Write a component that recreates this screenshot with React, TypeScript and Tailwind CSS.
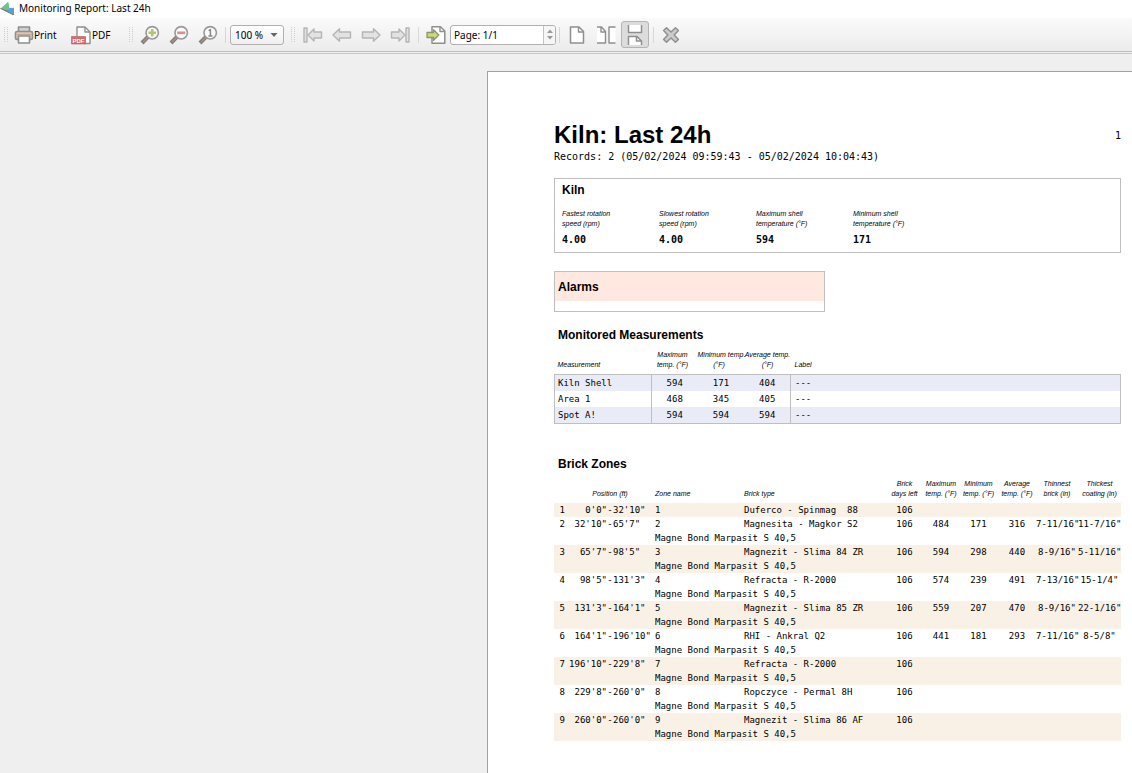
import type { ReactNode } from "react";

const G = "#8f8f8f";

function Svg({ w = 20, h = 20, children }: { w?: number; h?: number; children: ReactNode }) {
  return (
    <svg width={w} height={h} viewBox={`0 0 ${w} ${h}`} fill="none" strokeLinejoin="round" aria-hidden="true" className="block shrink-0">
      {children}
    </svg>
  );
}

function AppLogo() {
  return (
    <Svg w={14} h={14}>
      <path d="M0.500 7.500 14 6.800V14Z" fill="#5b9fd6" />
      <path d="M1.500 6.800 8.200 0.800 9.800 8.500 5 9Z" fill="#6cc58c" />
      <path d="M0.500 7.200 14 14" stroke="#86745f" strokeWidth="1.100" />
    </Svg>
  );
}

function PrintIcon() {
  return (
    <Svg>
      <path d="M4.500 7V2h11v5" fill="#d0d0d0" stroke={G} strokeWidth="1.600" />
      <rect x="1.500" y="6.500" width="17" height="8" rx="1.500" fill="#e3c3ae" stroke={G} strokeWidth="1.600" />
      <path d="M3 9.500h14" stroke="#c9a590" />
      <rect x="4.500" y="11" width="11" height="7" fill="#fff" stroke={G} strokeWidth="1.600" />
    </Svg>
  );
}

function PdfIcon() {
  return (
    <Svg>
      <path d="M6 11V2h8l5 5v11.500H13.500" fill="#fff" stroke={G} strokeWidth="1.400" />
      <path d="M14 2v5h5" stroke={G} strokeWidth="1.400" />
      <rect x="0.500" y="11.500" width="14" height="7.500" fill="#d46c6c" stroke="#b85858" strokeWidth="0.600" />
      <text x="7.500" y="17.500" textAnchor="middle" fontSize="6" fontWeight="700" fill="#fff" fontFamily="Liberation Sans, sans-serif">PDF</text>
    </Svg>
  );
}

function ZoomIcon({ kind }: { kind: "in" | "out" | "one" }) {
  return (
    <Svg>
      <path d="M8.200 11.600 2 18" stroke="#857b78" strokeWidth="4" />
      <path d="M7.400 12.600 2.800 17.200" stroke="#a98f88" strokeWidth="1.600" />
      <circle cx="12.200" cy="7.800" r="6.200" fill="#fafafa" stroke="#999" strokeWidth="1.600" />
      {kind === "in" && <path d="M12.200 4v7.600M8.400 7.800h7.600" stroke="#b4c566" strokeWidth="2.600" />}
      {kind === "out" && <path d="M8.200 7.800h8" stroke="#dd8c8c" strokeWidth="2.600" />}
      {kind === "one" && <path d="M10.600 5.600 12.400 4.600V11M10.400 11h4" stroke="#888" strokeWidth="1.500" />}
    </Svg>
  );
}

function NavIcon({ dir, edge }: { dir: "left" | "right"; edge?: boolean }) {
  return (
    <Svg>
      <g transform={dir === "right" ? "matrix(-1 0 0 1 20 0)" : undefined} stroke="#b5b5b5" strokeWidth="1.400" fill="#e2e2e2">
        {edge && <rect x="1" y="3" width="3" height="14" />}
        <path d={edge ? "M5 10 11 4V7h7.500v6H11v3Z" : "M1 10 7.500 3.800V7H18.500v6H7.500v3.200Z"} />
      </g>
    </Svg>
  );
}

function GotoIcon() {
  return (
    <Svg>
      <path d="M6 1.800h8.500L18.800 6v12.200H6Z" fill="#fff" stroke={G} strokeWidth="1.500" />
      <path d="M14 2v4.500h4.500" stroke={G} strokeWidth="1.400" />
      <path d="M1 7.500h6.500V4.800L12.800 10 7.500 15.200V12.500H1Z" fill="#c9da78" stroke="#8d9470" strokeWidth="1.300" />
    </Svg>
  );
}

function SinglePageIcon() {
  return (
    <Svg>
      <path d="M3.500 2h8.500l4.500 4.500V18h-13Z" fill="#fff" stroke={G} strokeWidth="1.500" />
      <path d="M11.500 2v5h5" stroke={G} strokeWidth="1.400" />
    </Svg>
  );
}

function FacingPagesIcon() {
  return (
    <Svg>
      <path d="M1 2h4.500L9.500 6.500V18H1Z" fill="#fff" />
      <path d="M1 2h4.500L9.500 6.500V18H1M5 2v5h4.500" stroke={G} strokeWidth="1.400" />
      <path d="M19.500 2H13v16h6.500Z" fill="#fff" />
      <path d="M19.500 2H13v16h6.500" stroke={G} strokeWidth="1.400" />
    </Svg>
  );
}

function ContinuousIcon() {
  return (
    <Svg h={22}>
      <path d="M3.500 1V8.500h13V1Z" fill="#fff" />
      <path d="M3.500 1V8.500h13V1" stroke={G} strokeWidth="1.500" />
      <path d="M3.500 21V12.500h8.500L16.500 17v4Z" fill="#fff" />
      <path d="M3.500 21V12.500h8.500L16.500 17v4M11.500 12.500V17h5" stroke={G} strokeWidth="1.500" />
    </Svg>
  );
}

function CloseIcon() {
  return (
    <Svg>
      <path d="M5.500 2.800 10 7 14.500 2.800 17.400 5.500 13.200 10 17.400 14.500 14.500 17.200 10 13 5.500 17.200 2.600 14.500 6.800 10 2.600 5.500Z" fill="#cbcbcb" stroke={G} strokeWidth="1.500" />
    </Svg>
  );
}

function Grip() {
  return (
    <svg width="4" height="16" viewBox="0 0 4 16" fill="#cdcdcd" aria-hidden="true" className="block shrink-0">
      {[0, 2, 4, 6, 8, 10, 12, 14].map((y) => (
        <path key={y} d={`M0 ${y}h1v1h-1zM3 ${y}h1v1h-1z`} />
      ))}
    </svg>
  );
}

function Divider() {
  return <span className="h-4 w-px shrink-0 bg-[#d8d8d8]" />;
}

function Tool({ label, children }: { label: string; children: ReactNode }) {
  return (
    <button type="button" aria-label={label} className="shrink-0">
      {children}
    </button>
  );
}

function Toolbar() {
  return (
    <div className="flex h-[34px] items-center border-b border-[#bdbdbd] bg-linear-to-b from-[#fafafa] to-[#ececec] pl-1 font-['Noto_Sans','Open_Sans',sans-serif] text-[10px] leading-4 text-black">
      <Grip />
      <button type="button" className="ml-1.5 flex w-[42px] shrink-0 items-center">
        <PrintIcon />
        Print
      </button>
      <button type="button" className="ml-[15px] flex w-[42px] shrink-0 items-center gap-px">
        <PdfIcon />
        PDF
      </button>
      <div className="ml-4 flex items-center gap-[7px]">
        <Grip />
        <div className="flex items-center gap-[9px]">
          <Tool label="Zoom in"><ZoomIcon kind="in" /></Tool>
          <Tool label="Zoom out"><ZoomIcon kind="out" /></Tool>
          <Tool label="Actual size"><ZoomIcon kind="one" /></Tool>
        </div>
        <Divider />
      </div>
      <div className="relative ml-1 flex shrink-0 items-center">
        <select aria-label="Zoom level" defaultValue="100" className="h-5 w-[54px] appearance-none rounded-[3px] border border-[#b0b0b0] bg-linear-to-b from-white to-[#efefef] pl-1">
          <option value="100">100 %</option>
          <option value="200">200 %</option>
        </select>
        <svg width="8" height="4" viewBox="0 0 8 4" aria-hidden="true" className="pointer-events-none absolute right-1.5">
          <path d="M0.500 0h7L4 4Z" fill="#666" />
        </svg>
      </div>
      <div className="ml-[7px] flex items-center gap-2">
        <Grip />
        <div className="flex items-center gap-[9px]">
          <Tool label="First page"><NavIcon dir="left" edge /></Tool>
          <Tool label="Previous page"><NavIcon dir="left" /></Tool>
          <Tool label="Next page"><NavIcon dir="right" /></Tool>
          <Tool label="Last page"><NavIcon dir="right" edge /></Tool>
        </div>
      </div>
      <div className="ml-2 flex items-center gap-[7px]">
        <Divider />
        <Tool label="Go to page"><GotoIcon /></Tool>
      </div>
      <div className="ml-1 flex h-5 w-[106px] shrink-0 overflow-hidden rounded-[3px] border border-[#b0b0b0] bg-white">
        <input aria-label="Page" defaultValue="Page: 1/1" className="w-0 flex-1 pl-[3px] outline-none" />
        <div className="flex w-3 flex-col items-center justify-center gap-[3px] border-l border-[#c4c4c4] bg-[#f6f6f6]">
          <button type="button" aria-label="Next" className="block">
            <svg width="6" height="4" viewBox="0 0 6 4" className="block"><path d="M0 4h6L3 0.500Z" fill="#9a9a9a" /></svg>
          </button>
          <button type="button" aria-label="Previous" className="block">
            <svg width="6" height="4" viewBox="0 0 6 4" className="block"><path d="M0 0h6L3 3.500Z" fill="#9a9a9a" /></svg>
          </button>
        </div>
      </div>
      <div className="ml-[3px] flex items-center gap-[7px]">
        <Divider />
        <div className="flex items-center gap-[9px]">
          <Tool label="Single page"><SinglePageIcon /></Tool>
          <Tool label="Facing pages"><FacingPagesIcon /></Tool>
        </div>
      </div>
      <button type="button" aria-label="Continuous" aria-pressed="true" className="ml-[5px] flex h-[27px] w-7 shrink-0 items-center justify-center rounded-[3px] border border-[#b4b4b4] bg-[#dcdcdc]">
        <ContinuousIcon />
      </button>
      <div className="ml-1 flex items-center gap-[7px]">
        <Divider />
        <Tool label="Close"><CloseIcon /></Tool>
      </div>
    </div>
  );
}

const stats = [
  { a: "Fastest rotation", b: "speed (rpm)", value: "4.00" },
  { a: "Slowest rotation", b: "speed (rpm)", value: "4.00" },
  { a: "Maximum shell", b: "temperature (°F)", value: "594" },
  { a: "Minimum shell", b: "temperature (°F)", value: "171" },
];

const measurements = [
  ["Kiln Shell", "594", "171", "404", "---"],
  ["Area 1", "468", "345", "405", "---"],
  ["Spot A!", "594", "594", "594", "---"],
];

type Zone = { from: string; to: string; brick: string; values: string[]; bond: boolean };

const zones: Zone[] = [
  { from: `0'0"`, to: `32'10"`, brick: "Duferco - Spinmag  88", values: ["106", "", "", "", "", ""], bond: false },
  { from: `32'10"`, to: `65'7"`, brick: "Magnesita - Magkor S2", values: ["106", "484", "171", "316", `7-11/16"`, `11-7/16"`], bond: true },
  { from: `65'7"`, to: `98'5"`, brick: "Magnezit - Slima 84 ZR", values: ["106", "594", "298", "440", `8-9/16"`, `5-11/16"`], bond: true },
  { from: `98'5"`, to: `131'3"`, brick: "Refracta - R-2000", values: ["106", "574", "239", "491", `7-13/16"`, `15-1/4"`], bond: true },
  { from: `131'3"`, to: `164'1"`, brick: "Magnezit - Slima 85 ZR", values: ["106", "559", "207", "470", `8-9/16"`, `22-1/16"`], bond: true },
  { from: `164'1"`, to: `196'10"`, brick: "RHI - Ankral Q2", values: ["106", "441", "181", "293", `7-11/16"`, `8-5/8"`], bond: true },
  { from: `196'10"`, to: `229'8"`, brick: "Refracta - R-2000", values: ["106", "", "", "", "", ""], bond: true },
  { from: `229'8"`, to: `260'0"`, brick: "Ropczyce - Permal 8H", values: ["106", "", "", "", "", ""], bond: true },
  { from: `260'0"`, to: `260'0"`, brick: "Magnezit - Slima 86 AF", values: ["106", "", "", "", "", ""], bond: true },
];

const brickHeads = [
  ["Brick", "days left"],
  ["Maximum", "temp. (°F)"],
  ["Minimum", "temp. (°F)"],
  ["Average", "temp. (°F)"],
  ["Thinnest", "brick (in)"],
  ["Thickest", "coating (in)"],
];

const mono = "font-['DejaVu_Sans_Mono','Liberation_Mono',monospace]";
const th = "p-0 pb-1 align-bottom text-[7px] leading-[10px] font-normal whitespace-nowrap italic";

function MeasurementTable() {
  return (
    <table className="mt-[7px] w-full table-fixed border-collapse">
      <colgroup>
        <col className="w-[97px]" />
        <col className="w-[46px]" />
        <col className="w-[47px]" />
        <col className="w-[46px]" />
        <col />
      </colgroup>
      <thead>
        <tr>
          <th className={`${th} pl-[3px] text-left`}>Measurement</th>
          <th className={`${th} pr-1`}>Maximum<br />temp. (°F)</th>
          <th className={`${th} pr-1`}>Minimum temp.<br />(°F)</th>
          <th className={th}>Average temp.<br />(°F)</th>
          <th className={`${th} pl-1 text-left`}>Label</th>
        </tr>
      </thead>
      <tbody className={`border border-[#bfbfbf] text-[9px] leading-4 ${mono}`}>
        {measurements.map((row) => (
          <tr key={row[0]} className="odd:bg-[#e9ecf6]">
            <td className="border-r border-[#bfbfbf] p-0 pl-[3px]">{row[0]}</td>
            <td className="p-0 text-center">{row[1]}</td>
            <td className="p-0 text-center">{row[2]}</td>
            <td className="border-r border-[#bfbfbf] p-0 text-center">{row[3]}</td>
            <td className="p-0 pl-1">{row[4]}</td>
          </tr>
        ))}
      </tbody>
    </table>
  );
}

function BrickTable() {
  return (
    <table className="mt-[7px] w-full table-fixed border-collapse">
      <colgroup>
        <col className="w-[11px]" />
        <col className="w-[42px]" />
        <col className="w-1.5" />
        <col className="w-[42px]" />
        <col className="w-[89px]" />
        <col />
        <col className="w-[37px]" />
        <col className="w-9" />
        <col className="w-[39px]" />
        <col className="w-[38px]" />
        <col className="w-[42px]" />
        <col className="w-[43px]" />
      </colgroup>
      <thead>
        <tr>
          <td className="p-0" />
          <th colSpan={3} className={th}>Position (ft)</th>
          <th className={`${th} text-left`}>Zone name</th>
          <th className={`${th} text-left`}>Brick type</th>
          {brickHeads.map(([a, b], i) => (
            <th key={i} className={th}>{a}<br />{b}</th>
          ))}
        </tr>
      </thead>
      {zones.map((z, i) => (
        <tbody key={i} className={`text-[9px] leading-[14px] whitespace-pre ${mono} ${i % 2 ? "bg-white" : "bg-[#faf1e6]"}`}>
          <tr>
            <td className="p-0 text-right">{i + 1}</td>
            <td className="p-0 text-right">{z.from}</td>
            <td className="p-0 text-center">-</td>
            <td className="p-0">{z.to}</td>
            <td className="p-0">{i + 1}</td>
            <td className="p-0">{z.brick}</td>
            {z.values.map((v, k) => (
              <td key={k} className="p-0 text-center">{v}</td>
            ))}
          </tr>
          {z.bond && (
            <tr>
              <td colSpan={4} className="p-0" />
              <td colSpan={8} className="p-0">Magne Bond Marpasit S 40,5</td>
            </tr>
          )}
        </tbody>
      ))}
    </table>
  );
}

export default function App() {
  return (
    <div className="flex min-h-screen flex-col bg-[#efefef] text-black">
      <header className="flex h-[18px] items-center gap-[5px] bg-white pb-0.5 font-['Noto_Sans','Open_Sans',sans-serif] text-[10px] leading-4">
        <AppLogo />
        Monitoring Report: Last 24h
      </header>
      <Toolbar />
      <main className="mt-px flex flex-1 flex-col border-t border-[#c8c8c8] pt-[17px] pl-[487px]">
        <article className="flex-1 border-t border-l border-[#a0a0a0] bg-white pt-[49px] pr-[11px] pb-7 pl-[66px] font-['Liberation_Sans',Arial,sans-serif]">
          <div className="flex items-center justify-between">
            <h1 className="text-2xl leading-7 font-bold">Kiln: Last 24h</h1>
            <span className={`text-[10px] ${mono}`}>1</span>
          </div>
          <p className={`mt-px text-[10px] leading-[14px] ${mono}`}>Records: 2 (05/02/2024 09:59:43 - 05/02/2024 10:04:43)</p>

          <section className="mt-3.5 border border-[#bfbfbf] pt-[3px] pb-[5px] pl-[7px]">
            <h2 className="text-xs leading-4 font-bold">Kiln</h2>
            <dl className="mt-[11px] flex">
              {stats.map((s) => (
                <div key={s.a} className="w-[97px]">
                  <dt className="text-[7px] leading-[10px] italic">{s.a}<br />{s.b}</dt>
                  <dd className={`mt-1 text-[10px] leading-[14px] font-bold ${mono}`}>{s.value}</dd>
                </div>
              ))}
            </dl>
          </section>

          <section className="mt-[18px] w-[271px] border border-[#bfbfbf] pb-2.5">
            <h2 className="bg-[#fee8df] pt-[7px] pb-1.5 pl-[3px] text-xs leading-4 font-bold">Alarms</h2>
          </section>

          <section className="mt-[15px]">
            <h2 className="pl-1 text-xs leading-4 font-bold">Monitored Measurements</h2>
            <MeasurementTable />
          </section>

          <section className="mt-8">
            <h2 className="pl-1 text-xs leading-4 font-bold">Brick Zones</h2>
            <BrickTable />
          </section>
        </article>
      </main>
    </div>
  );
}
